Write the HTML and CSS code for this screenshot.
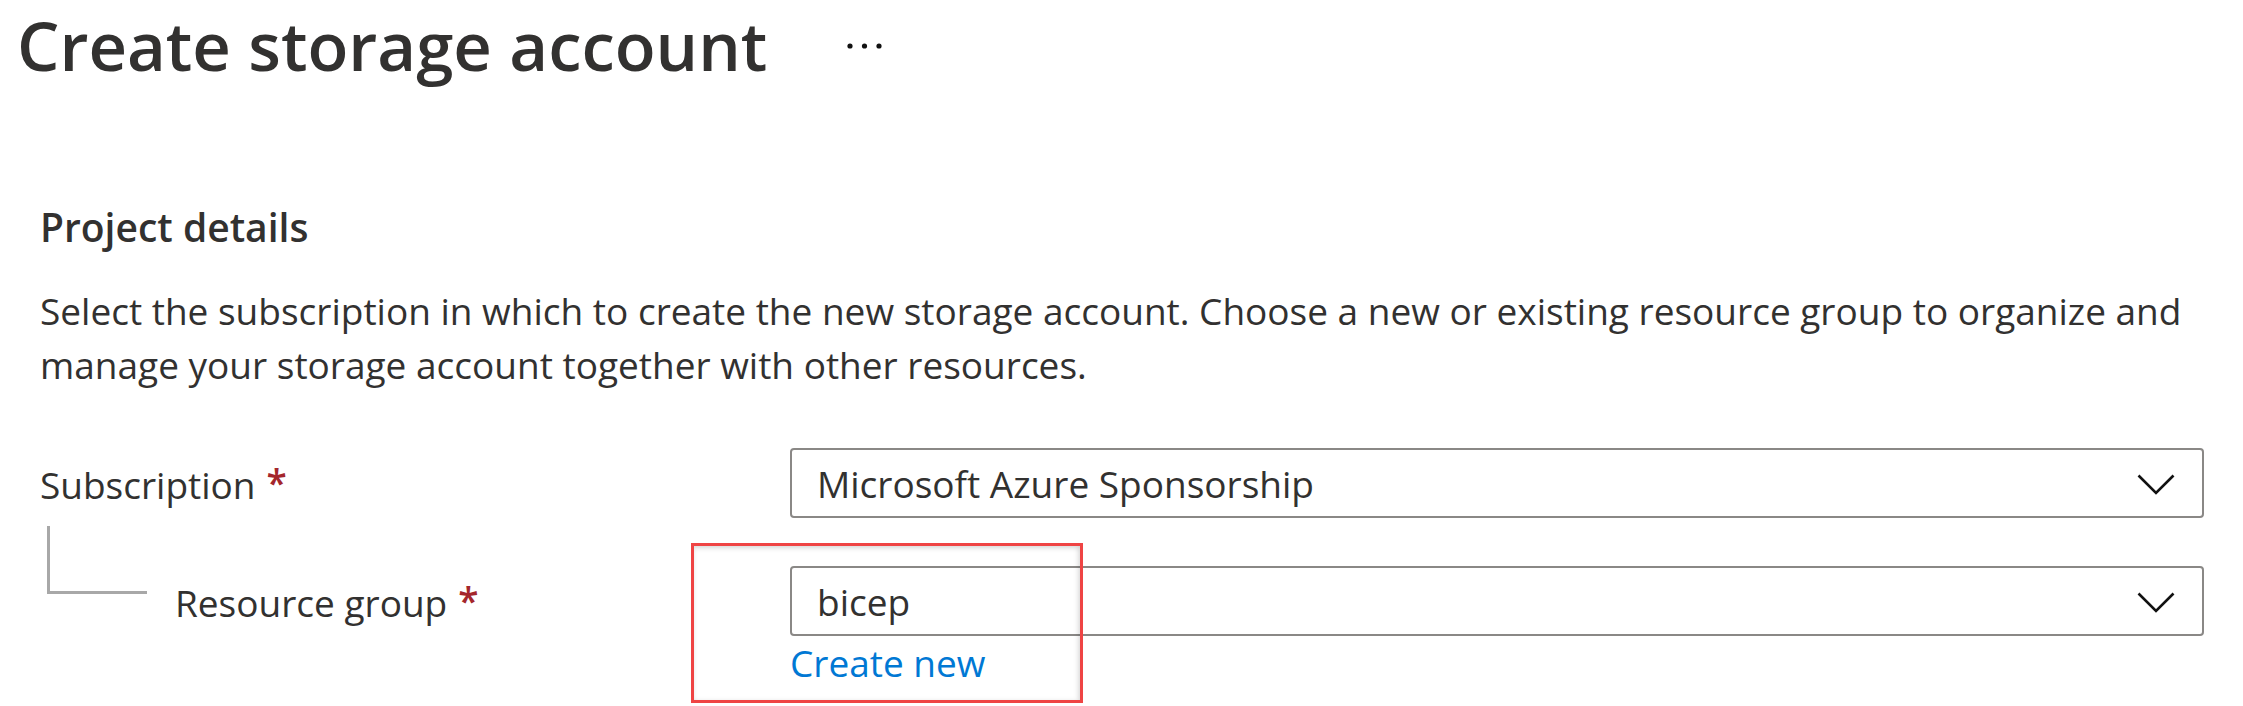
FILE: index.html
```html
<!DOCTYPE html>
<html lang="en">
<head>
<meta charset="utf-8">
<title>Create storage account</title>
<link rel="stylesheet" href="styles.css">
</head>
<body>
<header class="title-bar">
  <h1 class="title">Create storage account</h1>
  <button class="more" aria-label="More">
    <svg width="36" height="8" viewBox="0 0 36 8"><circle cx="3" cy="4" r="2.6"/><circle cx="17.5" cy="4" r="2.6"/><circle cx="32" cy="4" r="2.6"/></svg>
  </button>
</header>
<section class="section">
  <h2 class="section-title">Project details</h2>
  <p class="desc">Select the subscription in which to create the new storage account. Choose a new or existing resource group to organize and manage your storage account together with other resources.</p>
  <div class="form">
    <div class="row">
      <div class="label">Subscription<span class="req">*</span></div>
      <div class="control">
        <div class="select">
          <span class="value">Microsoft Azure Sponsorship</span>
          <svg class="chev" width="38" height="21" viewBox="0 0 38 21"><polyline points="1.5,1.5 19,19 36.5,1.5"/></svg>
        </div>
      </div>
    </div>
    <div class="row">
      <div class="label child"><span class="tree"></span>Resource group<span class="req">*</span></div>
      <div class="control">
        <div class="select">
          <span class="value">bicep</span>
          <svg class="chev" width="38" height="21" viewBox="0 0 38 21"><polyline points="1.5,1.5 19,19 36.5,1.5"/></svg>
        </div>
        <a class="link" href="#">Create new</a>
        <div class="highlight"></div>
      </div>
    </div>
  </div>
</section>
</body>
</html>
```
FILE: styles.css
```css
html, body {
  margin: 0;
  padding: 0;
  background: #ffffff;
}
body {
  font-family: "Open Sans", "Noto Sans", sans-serif;
  color: #323130;
  width: 2243px;
  height: 706px;
  overflow: hidden;
}
.title-bar {
  display: flex;
  align-items: center;
  padding-left: 17px;
  height: 91px;
}
.title {
  margin: 0;
  font-size: 67px;
  font-weight: 600;
  line-height: 91px;
}
.more {
  margin-left: 80px;
  padding: 0;
  border: 0;
  background: none;
  display: flex;
  align-items: center;
  height: 8px;
}
.more svg circle {
  fill: #111111;
}
.section {
  padding-left: 40px;
  padding-right: 39px;
}
.section-title {
  margin: 109px 0 0 0;
  font-size: 39px;
  font-weight: 600;
  line-height: 54px;
}
.desc {
  margin: 30px 0 0 0;
  font-size: 37px;
  line-height: 54px;
  max-width: 2160px;
}
.form {
  margin-top: 56px;
  display: flex;
  flex-direction: column;
  gap: 48px;
}
.row {
  display: flex;
  align-items: flex-start;
}
.label {
  width: 750px;
  flex: none;
  height: 70px;
  display: flex;
  align-items: center;
  padding-top: 3px;
  box-sizing: border-box;
  font-size: 37px;
  line-height: 54px;
}
.req {
  color: #a4262c;
  font-weight: 600;
  margin-left: 11px;
  position: relative;
  top: -2px;
}
.tree {
  flex: none;
  align-self: flex-start;
  width: 97px;
  height: 65px;
  margin: -43px 28px 0 7px;
  border-left: 3px solid #a8a8a8;
  border-bottom: 3px solid #a8a8a8;
}
.control {
  flex: 1;
  position: relative;
  display: flex;
  flex-direction: column;
  align-items: flex-start;
}
.select {
  box-sizing: border-box;
  width: 100%;
  height: 70px;
  border: 2.5px solid #8a8886;
  border-radius: 4px;
  display: flex;
  align-items: center;
  justify-content: space-between;
  padding: 2px 27px 0 25px;
  font-size: 37px;
  line-height: 54px;
}
.chev polyline {
  fill: none;
  stroke: #111111;
  stroke-width: 2.6;
}
.link {
  font-size: 37px;
  line-height: 54px;
  color: #0078d4;
  text-decoration: none;
}
.highlight {
  position: absolute;
  left: -99px;
  top: -23px;
  width: 392px;
  height: 160px;
  box-sizing: border-box;
  border: 3px solid #ef4444;
  box-shadow: inset 0 3px 4px rgba(0, 0, 0, 0.1), inset -3px 0 4px rgba(0, 0, 0, 0.08);
  pointer-events: none;
}
```
